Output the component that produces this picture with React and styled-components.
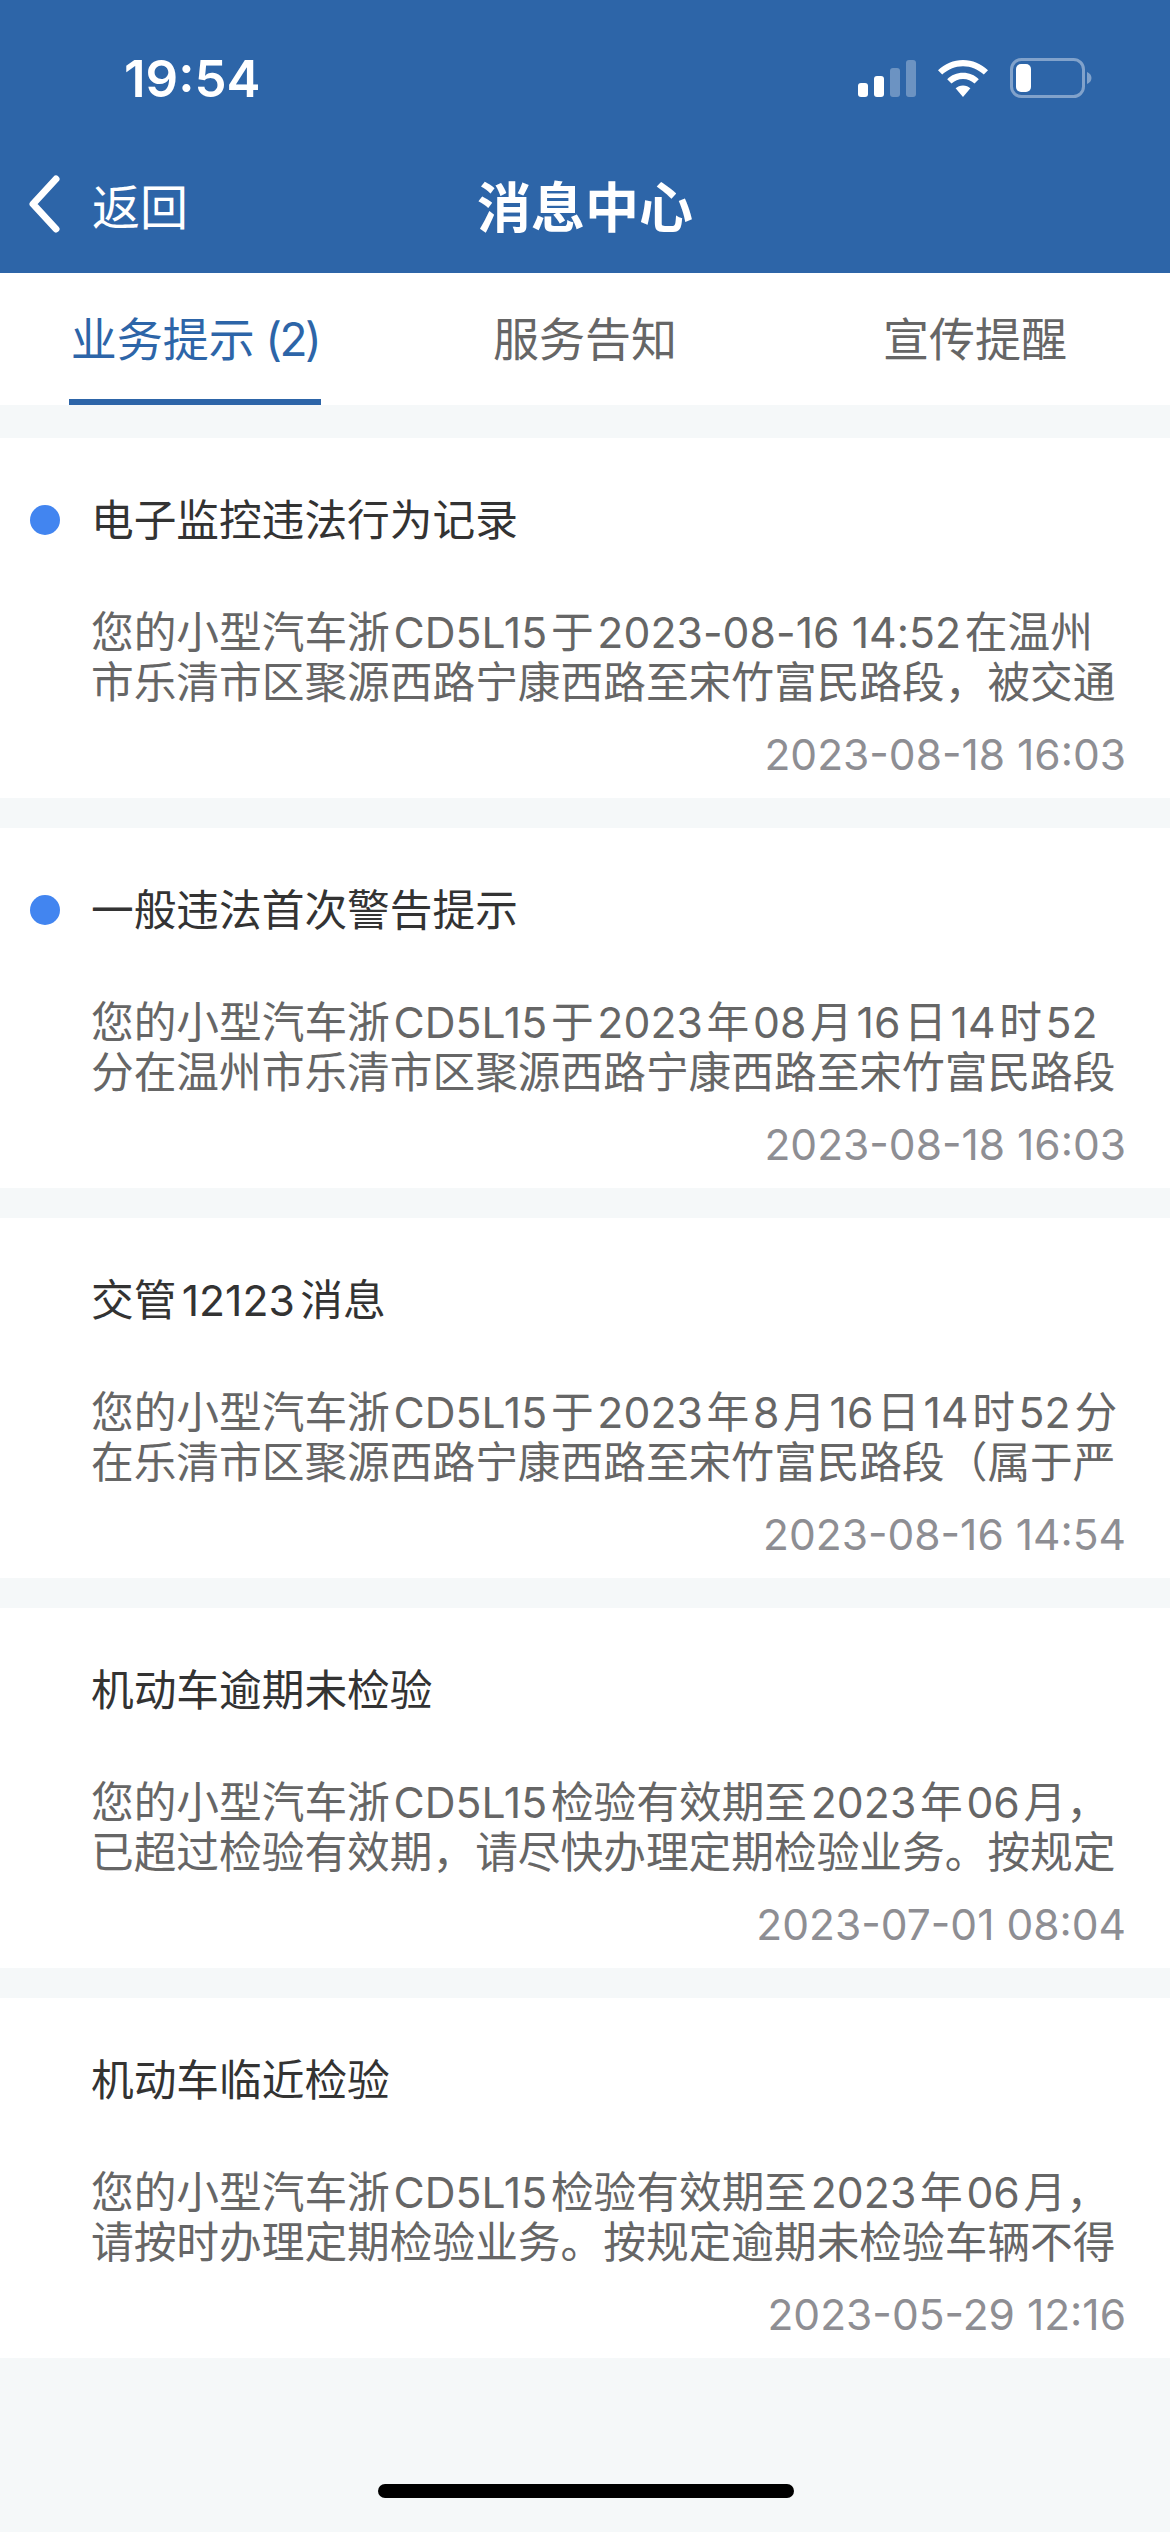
import React from 'react';
import styled, { createGlobalStyle } from 'styled-components';

const Global = createGlobalStyle`
    html, body {
        margin: 0;
        padding: 0;
        background: #f5f8f9;
    }
    * {
        box-sizing: border-box;
    }
`;

const FONT = `Inter, "Noto Sans CJK SC", sans-serif`;

const Page = styled.div`
    width: 1170px;
    height: 2532px;
    display: flex;
    flex-direction: column;
    background: #f5f8f9;
    font-family: ${FONT};
    text-autospace: normal;
`;

const Header = styled.header`
    height: 273px;
    background: #2d65a8;
    color: #fff;
    display: flex;
    flex-direction: column;
`;

const StatusBar = styled.div`
    height: 156px;
    display: flex;
    align-items: center;
    justify-content: space-between;
    padding: 0 78px 0 124px;
`;

const Time = styled.span`
    font-size: 51px;
    font-weight: 600;
    line-height: 1;
`;

const NavBar = styled.div`
    flex: 1;
    display: grid;
    grid-template-columns: 1fr auto 1fr;
    align-items: center;
    padding-bottom: 21px;
`;

const Back = styled.div`
    display: flex;
    align-items: center;
    gap: 32px;
    padding-left: 28px;
    font-size: 48px;
`;

const Title = styled.h1`
    margin: 0;
    font-size: 54px;
    font-weight: 600;
`;

const Tabs = styled.nav`
    height: 132px;
    background: #fff;
    display: grid;
    grid-template-columns: repeat(3, 1fr);
`;

const Tab = styled.div`
    display: flex;
    justify-content: center;
    font-size: 46px;
    color: ${p => (p.$active ? '#2d65a8' : '#666')};
`;

const TabLabel = styled.span`
    height: 132px;
    line-height: 132px;
    padding: 0 2px;
    border-bottom: 6px solid ${p => (p.$active ? '#2d65a8' : 'transparent')};
`;

const Count = styled.span`
    letter-spacing: -2.500px;
`;

const List = styled.main`
    display: flex;
    flex-direction: column;
    gap: 30px;
    padding-top: 33px;
`;

const Card = styled.article`
    height: 360px;
    background: #fff;
    padding: 0 44px 0 91px;
    position: relative;
`;

const CardTitle = styled.div`
    padding-top: 58px;
    font-size: 42.700px;
    line-height: 50px;
    color: #333;
`;

const Dot = styled.span`
    position: absolute;
    left: 30px;
    top: 67px;
    width: 30px;
    height: 30px;
    border-radius: 50%;
    background: #4285f0;
`;

const Body = styled.div`
    margin-top: 62px;
    font-size: 42.700px;
    line-height: 50px;
    color: #666;
    white-space: nowrap;
    text-autospace: no-autospace;
`;

const Latin = styled.span`
    margin: 0 3.700px;
    letter-spacing: 0.050px;
`;

const Stamp = styled.div`
    margin-top: 22px;
    text-align: right;
    font-size: 42.500px;
    line-height: 50px;
    color: #8e8e93;
`;

const HomeBar = styled.div`
    width: 416px;
    height: 14px;
    margin: auto 376px 34px 378px;
    border-radius: 7px;
    background: #000;
`;

const Signal = () => (
    <svg width="58" height="37" viewBox="0 0 58 37" fill="#fff">
        <rect x="0" y="23" width="10" height="14" rx="3" />
        <rect x="16" y="16" width="10" height="21" rx="3" />
        <rect x="32" y="8" width="10" height="29" rx="3" opacity="0.3" />
        <rect x="48" y="0" width="10" height="37" rx="3" opacity="0.3" />
    </svg>
);

const Wifi = () => (
    <svg width="50" height="37" viewBox="0 0 50 37" fill="#fff">
        <path d="M25 0C34.5 0 43.200 3.800 50 10.200L45.800 14.600C40.300 9.400 33 6.200 25 6.200S9.700 9.400 4.200 14.600L0 10.200C6.800 3.800 15.500 0 25 0Z" />
        <path d="M25 12.800C31.100 12.800 36.700 15.200 40.800 19.200L36.500 23.600C33.500 20.800 29.500 19 25 19S16.500 20.800 13.500 23.600L9.200 19.200C13.300 15.200 18.900 12.800 25 12.800Z" />
        <path d="M25 25.400C28 25.400 30.500 26.500 32.400 28.300L25 37L17.600 28.300C19.500 26.500 22 25.400 25 25.400Z" />
    </svg>
);

const Battery = () => (
    <svg width="82" height="40" viewBox="0 0 82 40" fill="none">
        <rect x="1.500" y="1.500" width="72" height="37" rx="10" stroke="#fff" strokeOpacity="0.4" strokeWidth="3" />
        <rect x="6" y="6" width="15" height="28" rx="5" fill="#fff" />
        <path d="M77 14C79.500 15 81.500 17.300 81.500 20S79.500 25 77 26Z" fill="#fff" fillOpacity="0.4" />
    </svg>
);

const StatusIcons = styled.div`
    display: flex;
    align-items: center;
    gap: 22px;
`;

const Chevron = () => (
    <svg width="32" height="58" viewBox="0 0 32 58" fill="none">
        <path d="M28 4L5 29L28 54" stroke="#fff" strokeWidth="7" strokeLinecap="round" strokeLinejoin="round" />
    </svg>
);

// latin runs get their own gap to the cjk around them
const withLatin = line =>
    line.split(/([0-9A-Za-z:\- ]+)/).map((part, i) => (i % 2 ? <Latin key={i}>{part}</Latin> : part));

const messages = [
    {
        unread: true,
        title: '电子监控违法行为记录',
        lines: ['您的小型汽车浙CD5L15于2023-08-16 14:52在温州', '市乐清市区聚源西路宁康西路至宋竹富民路段，被交通'],
        time: '2023-08-18 16:03',
    },
    {
        unread: true,
        title: '一般违法首次警告提示',
        lines: ['您的小型汽车浙CD5L15于2023年08月16日14时52', '分在温州市乐清市区聚源西路宁康西路至宋竹富民路段'],
        time: '2023-08-18 16:03',
    },
    {
        title: '交管12123消息',
        lines: ['您的小型汽车浙CD5L15于2023年8月16日14时52分', '在乐清市区聚源西路宁康西路至宋竹富民路段（属于严'],
        time: '2023-08-16 14:54',
    },
    {
        title: '机动车逾期未检验',
        lines: ['您的小型汽车浙CD5L15检验有效期至2023年06月，', '已超过检验有效期，请尽快办理定期检验业务。按规定'],
        time: '2023-07-01 08:04',
    },
    {
        title: '机动车临近检验',
        lines: ['您的小型汽车浙CD5L15检验有效期至2023年06月，', '请按时办理定期检验业务。按规定逾期未检验车辆不得'],
        time: '2023-05-29 12:16',
    },
];

const App = () => (
    <Page>
        <Global />
        <Header>
            <StatusBar>
                <Time>19:54</Time>
                <StatusIcons>
                    <Signal />
                    <Wifi />
                    <Battery />
                </StatusIcons>
            </StatusBar>
            <NavBar>
                <Back>
                    <Chevron />
                    返回
                </Back>
                <Title>消息中心</Title>
            </NavBar>
        </Header>
        <Tabs>
            <Tab $active><TabLabel $active>业务提示<Count> (2)</Count></TabLabel></Tab>
            <Tab><TabLabel>服务告知</TabLabel></Tab>
            <Tab><TabLabel>宣传提醒</TabLabel></Tab>
        </Tabs>
        <List>
            {messages.map(m => (
                <Card key={m.title}>
                    {m.unread && <Dot />}
                    <CardTitle>{m.title}</CardTitle>
                    <Body>
                        {m.lines.map(l => <div key={l}>{withLatin(l)}</div>)}
                    </Body>
                    <Stamp>{m.time}</Stamp>
                </Card>
            ))}
        </List>
        <HomeBar />
    </Page>
);

export default App;
